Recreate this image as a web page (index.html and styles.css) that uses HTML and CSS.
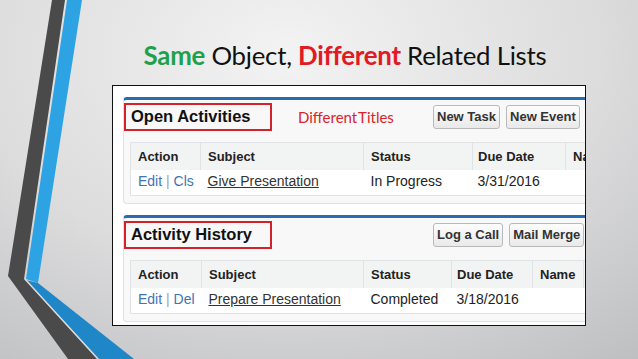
FILE: index.html
```html
<!DOCTYPE html>
<html lang="en">

<head>
  <meta charset="UTF-8">
  <title>Same Object, Different Related Lists</title>
  <link rel="stylesheet" href="styles.css">
</head>

<body>
  <div class="slide">
    <svg class="slide__deco" width="140" height="359" viewBox="0 0 140 359">
      <polygon points="52,0 65,0 24,279 97,359 68,359 8,276" fill="#4a4a4b" />
      <polygon points="67,0 82,0 38,283 26,279" fill="#2ea3e3" />
      <polygon points="26,280 38,283 134,359 99,359" fill="#1f86c8" />
      <line x1="25" y1="279" x2="98" y2="359" stroke="#d8dadc" stroke-width="1.2" />
    </svg>

    <div class="slide__content">
      <h1 class="title">
        <span class="title__same">Same</span> Object, <span class="title__diff">Different</span> Related Lists
      </h1>

      <div class="shot">
        <div class="rlist">
          <div class="rlist__head">
            <h2 class="rlist__title">Open Activities</h2>
            <span class="rlist__note">Different Titles</span>
            <div class="rlist__buttons rlist__buttons_after-note">
              <span class="btn">New Task</span>
              <span class="btn">New Event</span>
            </div>
          </div>
          <table class="rlist__table rlist__table_open">
            <tr>
              <th>Action</th>
              <th>Subject</th>
              <th>Status</th>
              <th>Due Date</th>
              <th>Name</th>
            </tr>
            <tr>
              <td><a class="act">Edit</a> <span class="sep">|</span> <a class="act">Cls</a></td>
              <td><a class="subj">Give Presentation</a></td>
              <td>In Progress</td>
              <td>3/31/2016</td>
              <td></td>
            </tr>
          </table>
        </div>

        <div class="rlist">
          <div class="rlist__head">
            <h2 class="rlist__title">Activity History</h2>
            <div class="rlist__buttons">
              <span class="btn">Log a Call</span>
              <span class="btn">Mail Merge</span>
            </div>
          </div>
          <table class="rlist__table rlist__table_history">
            <tr>
              <th>Action</th>
              <th>Subject</th>
              <th>Status</th>
              <th>Due Date</th>
              <th>Name</th>
              <th></th>
            </tr>
            <tr>
              <td><a class="act">Edit</a> <span class="sep">|</span> <a class="act">Del</a></td>
              <td><a class="subj">Prepare Presentation</a></td>
              <td>Completed</td>
              <td>3/18/2016</td>
              <td></td>
              <td></td>
            </tr>
          </table>
        </div>
      </div>
    </div>
  </div>
</body>

</html>
```

FILE: styles.css
```css
* {
  box-sizing: border-box;
}

html,
body {
  margin: 0;
  padding: 0;
}

body {
  width: 638px;
  height: 359px;
  overflow: hidden;
  background: radial-gradient(ellipse 90% 110% at 45% 15%, #f3f3f3 0%, #dcdcdd 55%, #bdbec0 100%);
}

.slide {
  position: relative;
  width: 638px;
  height: 359px;
}

.slide__deco {
  position: absolute;
  left: 0;
  top: 0;
}

.slide__content {
  margin-left: 112px;
  width: 474px;
  padding-top: 38px;
}

.title {
  margin: 0 0 0 -8px;
  height: 47px;
  text-align: center;
  font-family: Lato, "Open Sans", sans-serif;
  font-weight: 400;
  font-size: 25.8px;
  line-height: 34px;
  color: #111;
  letter-spacing: -0.25px;
}

.title__same {
  color: #1fa14b;
  font-weight: 700;
}

.title__diff {
  color: #e01b24;
  font-weight: 700;
}

/* screenshot panel */
.shot {
  height: 241px;
  border: 1px solid #111;
  background-color: #fff;
  padding: 11px 0 0 10px;
  overflow: hidden;
  font-family: "Liberation Sans", Arial, sans-serif;
}

.rlist {
  width: 540px;
  background-color: #f8f8f8;
  border: 1px solid #e2e2e2;
  border-top: 3px solid #2a6cb3;
  border-radius: 4px 0 0 4px;
  padding: 0 0 7px 0;
  margin-bottom: 11px;
}

.rlist__head {
  display: flex;
  align-items: center;
  padding-top: 3px;
  margin-bottom: 11px;
}

.rlist__head > * {
  flex-shrink: 0;
  white-space: nowrap;
}

.rlist__title {
  margin: 0;
  width: 148px;
  height: 28px;
  border: 2px solid #d3222a;
  padding: 0 0 0 5px;
  font-size: 16.5px;
  line-height: 23px;
  font-weight: 700;
  color: #111;
}

.rlist__note {
  width: 98px;
  margin-left: 26px;
  font-family: Lato, "Open Sans", sans-serif;
  font-size: 15px;
  color: #d9232a;
  word-spacing: -2.5px;
}

.rlist__buttons {
  display: flex;
  gap: 6px;
  margin-left: 161px;
}

.rlist__buttons_after-note {
  margin-left: 37px;
}

.btn {
  display: block;
  height: 24px;
  padding: 0 3px;
  border: 1px solid #b9b9b9;
  border-radius: 3px;
  background: linear-gradient(#fdfdfd, #e9e9e9);
  font-size: 13px;
  font-weight: 700;
  line-height: 22px;
  color: #333;
  white-space: nowrap;
}

.rlist__table {
  margin-left: 6px;
  border-collapse: collapse;
  table-layout: fixed;
  border: 1px solid #e0e3e5;
  font-size: 14px;
  color: #222;
}

.rlist__table th {
  height: 27px;
  background-color: #f2f3f3;
  border-right: 1px solid #e0e3e5;
  padding: 0 0 0 7px;
  text-align: left;
  font-size: 13px;
  font-weight: 700;
  white-space: nowrap;
  overflow: hidden;
}

.rlist__table td {
  height: 26px;
  background-color: #fff;
  padding: 0 0 2px 7px;
  white-space: nowrap;
}

.rlist__table_open {
  width: 520px;
}

.rlist__table_open th:nth-child(1) { width: 70px; }
.rlist__table_open th:nth-child(2) { width: 163px; }
.rlist__table_open th:nth-child(3) { width: 109px; }
.rlist__table_open th:nth-child(4) { width: 93px; }
.rlist__table_open th:nth-child(5) { width: 85px; }

.rlist__table_history {
  width: 520px;
}

.rlist__table_history th:nth-child(1) { width: 71px; }
.rlist__table_history th:nth-child(2) { width: 162px; }
.rlist__table_history th:nth-child(3) { width: 88px; }
.rlist__table_history th:nth-child(4) { width: 81px; }
.rlist__table_history th:nth-child(5) { width: 51px; }
.rlist__table_history th:nth-child(6) { width: 67px; }

.rlist__table th:nth-child(4),
.rlist__table td:nth-child(4) {
  padding-left: 5px;
}

.act {
  color: #3f74b0;
}

.sep {
  color: #a0a0a0;
}

.subj {
  color: #333;
  text-decoration: underline;
}
```
